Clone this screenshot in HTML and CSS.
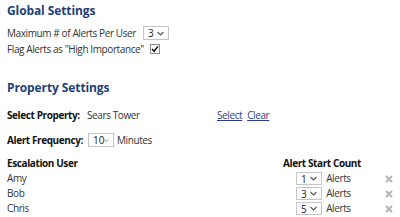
FILE: index.html
```html
<!DOCTYPE html>
<html>
<head>
    <meta charset="utf-8">
    <title>Alert Settings</title>
    <link rel="stylesheet" href="styles.css">
</head>
<body>
    <div class="page">
        <h2>Global Settings</h2>
        <div class="row">
            <span class="lbl-max">Maximum # of Alerts Per User</span>
            <span class="sel"><span class="val">3</span><svg width="7" height="5" viewBox="0 0 7 5"><path d="M0.5 1 L3.5 4 L6.5 1" fill="none" stroke="#555" stroke-width="1.1"/></svg></span>
        </div>
        <div class="row">
            <span class="lbl-flag">Flag Alerts as "High Importance"</span>
            <span class="chk"><svg width="8" height="8" viewBox="0 0 8 8"><path d="M1 4 L3.1 6.3 L7 1.4" fill="none" stroke="#111" stroke-width="1.5"/></svg></span>
        </div>

        <h2 class="sect">Property Settings</h2>
        <div class="row prop">
            <b class="lbl-prop">Select Property:</b>
            <span class="prop-name">Sears Tower</span>
            <a href="javascript:;">Select</a>
            <a href="javascript:;">Clear</a>
        </div>
        <div class="row freq">
            <b>Alert Frequency:</b>
            <span class="sel"><span class="val">10</span><svg width="7" height="5" viewBox="0 0 7 5"><path d="M0.5 1 L3.5 4 L6.5 1" fill="none" stroke="#555" stroke-width="1.1"/></svg></span>
            <span>Minutes</span>
        </div>

        <table class="users">
            <tr>
                <th class="c-user">Escalation User</th>
                <th class="c-count">Alert Start Count</th>
                <th class="c-del"></th>
            </tr>
            <tr>
                <td>Amy</td>
                <td class="c-count"><span class="sel"><span class="val">1</span><svg width="7" height="5" viewBox="0 0 7 5"><path d="M0.5 1 L3.5 4 L6.5 1" fill="none" stroke="#555" stroke-width="1.1"/></svg></span> Alerts</td>
                <td class="c-del"><svg width="8" height="8" viewBox="0 0 8 8"><path d="M1 1 L7 7 M7 1 L1 7" stroke="#b4b4b4" stroke-width="2"/></svg></td>
            </tr>
            <tr>
                <td>Bob</td>
                <td class="c-count"><span class="sel"><span class="val">3</span><svg width="7" height="5" viewBox="0 0 7 5"><path d="M0.5 1 L3.5 4 L6.5 1" fill="none" stroke="#555" stroke-width="1.1"/></svg></span> Alerts</td>
                <td class="c-del"><svg width="8" height="8" viewBox="0 0 8 8"><path d="M1 1 L7 7 M7 1 L1 7" stroke="#b4b4b4" stroke-width="2"/></svg></td>
            </tr>
            <tr>
                <td>Chris</td>
                <td class="c-count"><span class="sel"><span class="val">5</span><svg width="7" height="5" viewBox="0 0 7 5"><path d="M0.5 1 L3.5 4 L6.5 1" fill="none" stroke="#555" stroke-width="1.1"/></svg></span> Alerts</td>
                <td class="c-del"><svg width="8" height="8" viewBox="0 0 8 8"><path d="M1 1 L7 7 M7 1 L1 7" stroke="#b4b4b4" stroke-width="2"/></svg></td>
            </tr>
        </table>
    </div>
</body>
</html>
```

FILE: styles.css
```css
body { margin: 0; background: #fff; color: #333; font-family: "Open Sans", "Liberation Sans", sans-serif; font-size: 10px; letter-spacing: -0.4px; }
.page { padding: 2px 7px 0 7px; }
h2 { margin: 0 0 5px 0; font-size: 12px; font-weight: bold; color: #1f3f78; line-height: 18px; letter-spacing: -0.1px; }
h2.sect { margin-top: 22px; margin-bottom: 9px; }
.row { display: flex; align-items: center; height: 16px; line-height: 16px; white-space: nowrap; }
.row > * { flex-shrink: 0; }
.lbl-max { width: 136px; }
.lbl-flag { width: 143px; }
.sel { display: inline-flex; align-items: center; justify-content: space-between; box-sizing: border-box; width: 26px; height: 14px; border: 1px solid #c6c6c6; padding: 0 4px 0 4px; background: #fff; color: #222; font-size: 10px; letter-spacing: 0; }
.sel .val { line-height: 12px; }
.chk { display: inline-flex; align-items: center; justify-content: center; box-sizing: border-box; width: 10px; height: 10px; border: 1px solid #8e8e8e; background: #fff; }
.row.prop { height: 18px; margin-bottom: 8px; }
.row b { color: #111; }
.lbl-prop { width: 80px; }
.prop-name { width: 130px; }
.row a { color: #2d3d8c; text-decoration: underline; margin-right: 5px; }
.row.freq { height: 16px; margin-bottom: 8px; }
.row.freq .sel { margin: 0 3px 0 5px; }
.users { border-collapse: collapse; width: 386px; white-space: nowrap; }
.users th { text-align: left; color: #111; font-weight: bold; padding: 0; height: 15px; line-height: 15px; }
.users td { padding: 0; height: 15px; line-height: 13px; }
.users .c-user { width: 276px; }
.users td.c-count { padding-left: 13px; }
.users td.c-count .sel { height: 13px; vertical-align: middle; margin-right: 2px; }
.users .c-del { width: 26px; text-align: right; }
.users td.c-del svg { vertical-align: middle; }
```
